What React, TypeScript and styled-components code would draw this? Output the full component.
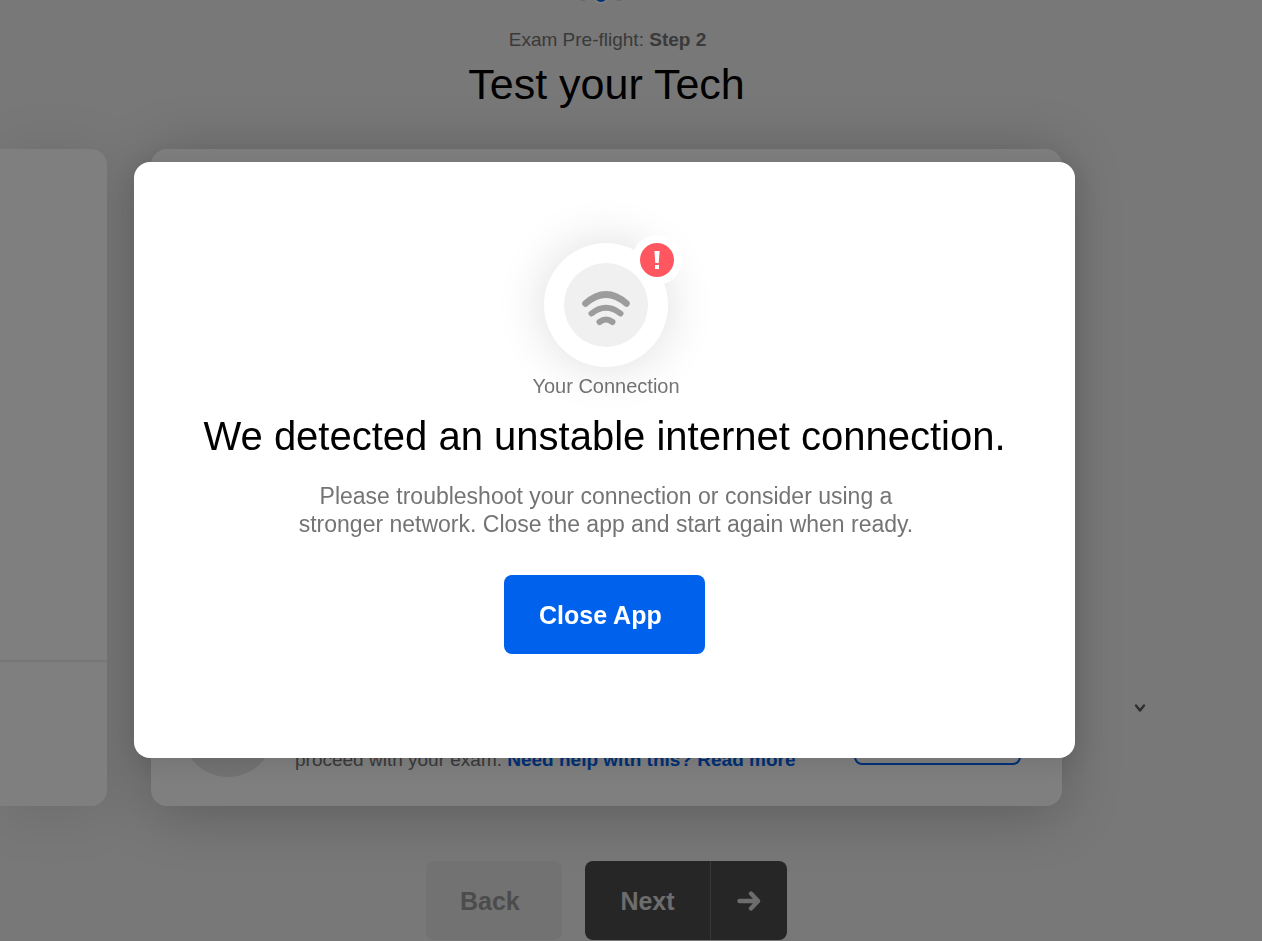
import React from "react";
import styled, { createGlobalStyle } from "styled-components";

const GlobalStyle = createGlobalStyle`
  *, *::before, *::after { box-sizing: border-box; }
  body {
    margin: 0;
    overflow: hidden;
    background: #f0f0f0;
    color: #000;
    font-family: "Liberation Sans", Arial, sans-serif;
  }
  h1, h2, p { margin: 0; font-weight: 400; }
  button { font-family: inherit; border: 0; cursor: pointer; }
`;

const Page = styled.main`
  min-height: 100vh;
  padding-right: 49px;
  display: flex;
  flex-direction: column;
`;

const StepDots = styled.div`
  height: 4px;
  padding-right: 12px;
  overflow: hidden;
  display: flex;
  align-items: flex-end;
  justify-content: center;
`;

const DotTrack = styled.div`
  flex: none;
  height: 16px;
  display: flex;
  align-items: center;
  gap: 5px;
`;

const Dot = styled.span<{ $active?: boolean }>`
  width: ${(p) => (p.$active ? 16 : 10)}px;
  height: ${(p) => (p.$active ? 16 : 10)}px;
  border-radius: 50%;
  border: ${(p) => (p.$active ? "2px solid #fff" : "0")};
  background: ${(p) => (p.$active ? "#0061ec" : "#d0d0d0")};
`;

const Header = styled.header`
  height: 145px;
  padding-top: 24px;
  text-align: center;
`;

const StepLabel = styled.p`
  padding-left: 2px;
  font-size: 19px;
  line-height: 24px;
  color: #747474;
`;

const Title = styled.h1`
  margin-top: 8px;
  font-size: 43px;
  line-height: 48px;
`;

const Carousel = styled.section`
  display: grid;
  grid-template-columns: minmax(0, 1fr) minmax(0, 911px) minmax(0, 1fr);
  height: 657px;
`;

const Card = styled.div`
  background: #fff;
  border-radius: 16px;
  box-shadow: 0 6px 60px rgba(0, 0, 0, 0.24);
  display: flex;
  flex-direction: column;
  justify-content: flex-end;
`;

const PreviousCard = styled(Card)`
  position: relative;
  z-index: 1;
  margin-right: 44px;
  border-radius: 0 16px 16px 0;
  box-shadow: 0 6px 60px rgba(0, 0, 0, 0.1);
`;

const PreviousFooter = styled.div`
  height: 146px;
  border-top: 2px solid #ececec;
`;

const TestRow = styled.div`
  display: flex;
  align-items: flex-end;
  padding: 0 41px 29px 31px;
`;

const TestIcon = styled.span`
  flex: none;
  width: 92px;
  height: 92px;
  margin-right: 21px;
  border-radius: 50%;
  background: #e6e6e6;
`;

const TestText = styled.p`
  flex: 1;
  padding-bottom: 4px;
  font-size: 19px;
  line-height: 26px;
  color: #747474;
  white-space: nowrap;
`;

const HelpLink = styled.a`
  color: #0061ec;
  font-weight: 700;
  text-decoration: none;
`;

const OutlineButton = styled.button`
  width: 167px;
  height: 68px;
  margin-bottom: 12px;
  border: 2px solid #0061ec;
  border-radius: 8px;
  background: transparent;
`;

const ExpandArea = styled.div`
  display: flex;
  align-items: flex-end;
  justify-content: center;
  padding: 0 0 86px 4px;
`;

const ExpandButton = styled.button`
  display: flex;
  padding: 4px;
  background: transparent;
  color: #5c5c5c;
`;

const Actions = styled.nav`
  display: flex;
  justify-content: center;
  gap: 23px;
  padding-top: 55px;
`;

const ActionButton = styled.button<{ $tone: "muted" | "dark" | "primary" }>`
  height: 79px;
  display: flex;
  align-items: center;
  padding: 0;
  border-radius: 8px;
  font-size: 25px;
  line-height: 32px;
  font-weight: 700;
  background: ${(p) => ({ muted: "#e4e4e4", dark: "#4c4c4c", primary: "#0061ec" })[p.$tone]};
  color: ${(p) => ({ muted: "#989898", dark: "#dadada", primary: "#fff" })[p.$tone]};
`;

const BackButton = styled(ActionButton)`
  width: 136px;
  padding-left: 34px;
`;

const NextLabel = styled.span`
  width: 125px;
  text-align: center;
`;

const NextArrow = styled.span`
  width: 77px;
  height: 100%;
  display: flex;
  align-items: center;
  justify-content: center;
  border-left: 1px solid #707070;
`;

const Overlay = styled.div`
  position: fixed;
  inset: 0;
  z-index: 10;
  display: flex;
  align-items: center;
  justify-content: center;
  padding: 0 53px 21px 0;
  background: rgba(0, 0, 0, 0.5);
`;

const Dialog = styled.div`
  width: 100%;
  max-width: 941px;
  padding: 81px 40px 104px;
  display: flex;
  flex-direction: column;
  align-items: center;
  text-align: center;
  background: #fff;
  border-radius: 16px;
  box-shadow: 0 4px 30px rgba(0, 0, 0, 0.12);
`;

const ConnectionIcon = styled.div`
  position: relative;
  width: 124px;
  height: 124px;
  margin-left: 3px;
  padding: 20px;
  border-radius: 50%;
  background: #fff;
  box-shadow: 0 0 50px rgba(0, 0, 0, 0.14);
`;

const AlertBadge = styled.span`
  position: absolute;
  top: -8px;
  right: -14px;
  width: 50px;
  height: 50px;
`;

const Caption = styled.p`
  margin-top: 7px;
  padding-left: 3px;
  font-size: 20px;
  line-height: 24px;
  color: #747474;
`;

const DialogTitle = styled.h2`
  margin-top: 14px;
  font-size: 40px;
  line-height: 48px;
  white-space: nowrap;
`;

const Message = styled.p`
  margin-top: 22px;
  padding-left: 3px;
  font-size: 23px;
  line-height: 28px;
  color: #747474;
`;

const CloseButton = styled(ActionButton)`
  width: 201px;
  margin-top: 37px;
  padding-left: 35px;
`;

export default function App() {
  return (
    <>
      <GlobalStyle />
      <Page>
        <StepDots>
          <DotTrack>
            <Dot />
            <Dot $active />
            <Dot />
          </DotTrack>
        </StepDots>
        <Header>
          <StepLabel>
            Exam Pre-flight: <strong>Step 2</strong>
          </StepLabel>
          <Title>Test your Tech</Title>
        </Header>
        <Carousel>
          <PreviousCard>
            <PreviousFooter />
          </PreviousCard>
          <Card>
            <TestRow>
              <TestIcon />
              <TestText>
                proceed with your exam. <HelpLink href="#help">Need help with this? Read more</HelpLink>
              </TestText>
              <OutlineButton aria-label="Run test" />
            </TestRow>
          </Card>
          <ExpandArea>
            <ExpandButton aria-label="Expand">
              <svg width="14" height="16" viewBox="0 0 14 16" fill="none" stroke="currentColor" strokeWidth="2.4" strokeLinecap="round" strokeLinejoin="round">
                <path d="M3 5.5 7 10.5 11 5.5" />
              </svg>
            </ExpandButton>
          </ExpandArea>
        </Carousel>
        <Actions>
          <BackButton $tone="muted">Back</BackButton>
          <ActionButton $tone="dark">
            <NextLabel>Next</NextLabel>
            <NextArrow>
              <svg width="24" height="22" viewBox="0 0 24 22" fill="none" stroke="currentColor" strokeWidth="4.4" strokeLinecap="round" strokeLinejoin="round">
                <path d="M2.5 11H21M14 3.500 21 11l-7 7.500" />
              </svg>
            </NextArrow>
          </ActionButton>
        </Actions>
      </Page>
      <Overlay>
        <Dialog role="dialog" aria-modal="true" aria-labelledby="dialog-title">
          <ConnectionIcon>
            <svg width="84" height="84" viewBox="0 0 84 84" fill="none" stroke="#9c9c9c" strokeLinecap="round">
              <circle cx="42" cy="42" r="42" fill="#f0f0f0" stroke="none" />
              <path d="M21.500 40.500Q42 22.500 62.500 40.500" strokeWidth="6.500" />
              <path d="M27.500 50.500Q42 39 56.500 50.500" strokeWidth="6" />
              <path d="M35.500 59Q42 54 48.500 59" strokeWidth="6" />
            </svg>
            <AlertBadge>
              <svg width="50" height="50" viewBox="0 0 50 50">
                <circle cx="25" cy="25" r="25" fill="#fff" />
                <circle cx="25" cy="25" r="17" fill="#ff5660" />
                <path d="M22.400 16h5.200l-.9 12h-3.400zM23 30h4v4h-4z" fill="#fff" />
              </svg>
            </AlertBadge>
          </ConnectionIcon>
          <Caption>Your Connection</Caption>
          <DialogTitle id="dialog-title">We detected an unstable internet connection.</DialogTitle>
          <Message>
            Please troubleshoot your connection or consider using a
            <br />
            stronger network. Close the app and start again when ready.
          </Message>
          <CloseButton $tone="primary">Close App</CloseButton>
        </Dialog>
      </Overlay>
    </>
  );
}
